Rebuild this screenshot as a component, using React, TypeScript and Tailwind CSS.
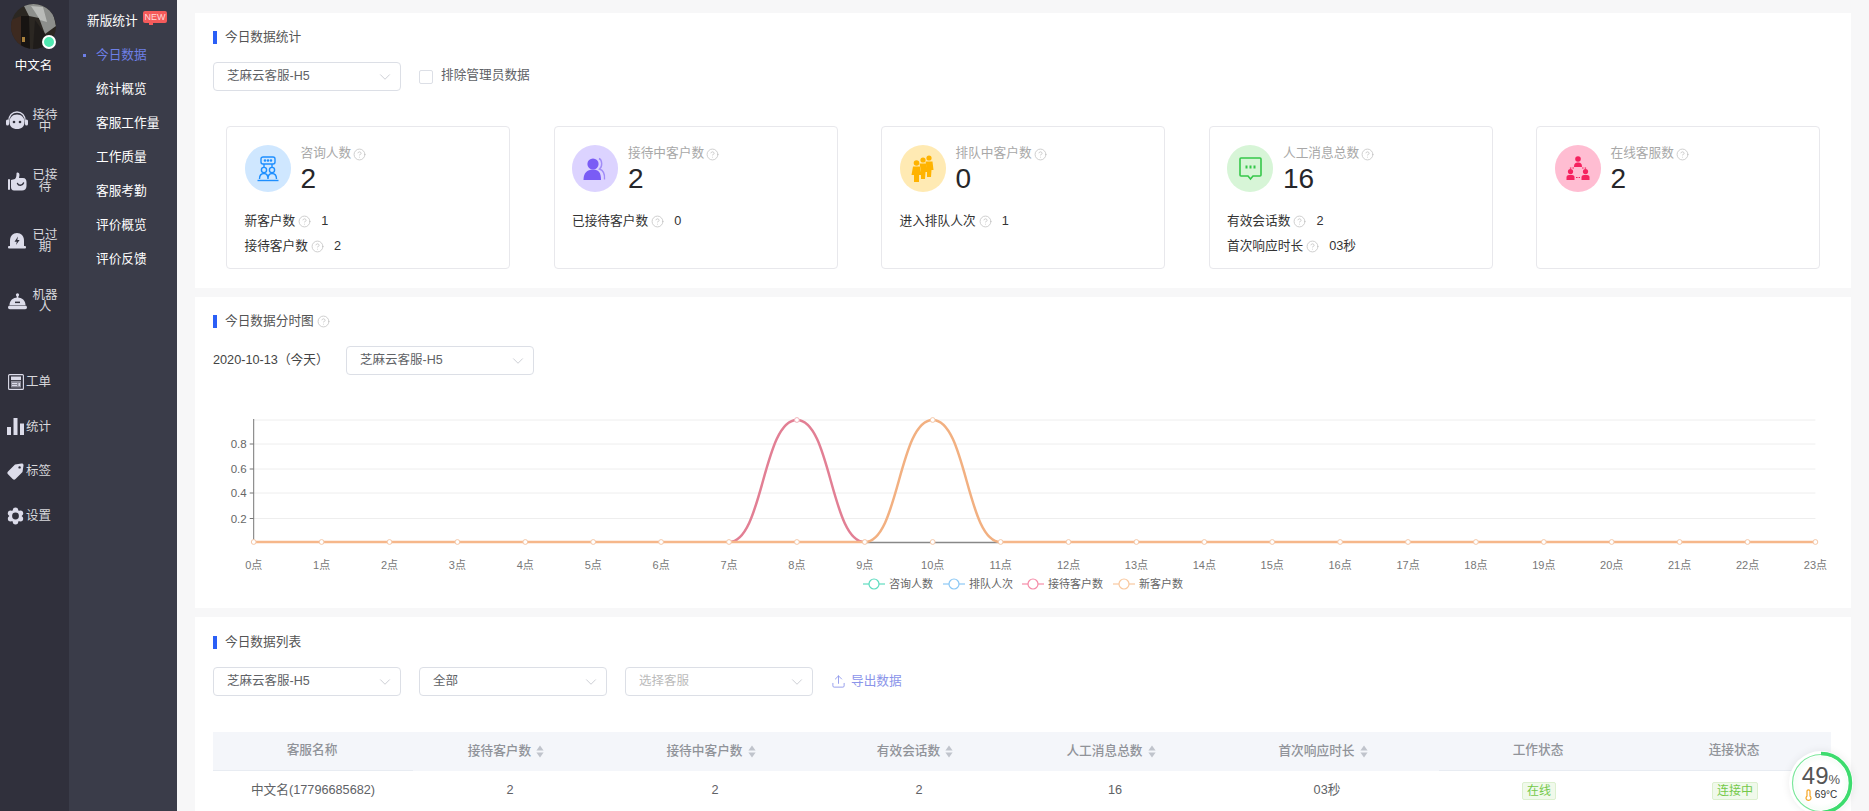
import { ChevronDown, CircleHelp, Upload } from "lucide-react"
import type { ReactNode } from "react"

const iconColor = "#dcdcea"

const HeadsetIcon = () => (
  <svg width="22" height="20" viewBox="0 0 22 20">
    <path d="M2.5 11 C2.5 4.5 6.5 1 11 1 C15.5 1 19.5 4.5 19.5 11" fill="none" stroke={iconColor} strokeWidth="1.3" />
    <rect x="0" y="8.5" width="3" height="6" rx="1.5" fill={iconColor} />
    <rect x="19" y="8.5" width="3" height="6" rx="1.5" fill={iconColor} />
    <path d="M11 3.5 C15.8 3.5 18.5 6.8 18.5 11 C18.5 15.6 15.6 18 11 18 C6.4 18 3.5 15.6 3.5 11 C3.5 6.8 6.2 3.5 11 3.5Z" fill={iconColor} />
    <circle cx="8" cy="11" r="1.3" fill="#30303c" />
    <circle cx="14" cy="11" r="1.3" fill="#30303c" />
  </svg>
)

const ThumbIcon = () => (
  <svg width="19" height="19" viewBox="0 0 19 19">
    <rect x="0" y="7" width="2" height="11" rx="1" fill={iconColor} />
    <path d="M3 8 L7 7 C8.5 5.5 8.5 3 8.5 1.5 C8.5 0 11.5 0 11.5 3 L11 6 L15 6 C17.5 6 18.5 8 18.5 10 L18.5 14 C18.5 17 16.5 18.5 14 18.5 L6 18.5 C4 18.5 3 17 3 15Z" fill={iconColor} />
    <path d="M9.5 11.5 C10.5 14 14.5 14 15.5 11" fill="none" stroke="#30303c" strokeWidth="1.4" strokeLinecap="round" />
  </svg>
)

const AlertIcon = () => (
  <svg width="18" height="18" viewBox="0 0 18 18">
    <path d="M2 14.5 L2 8.5 C2 4 5 1 9 1 C13 1 16 4 16 8.5 L16 14.5Z" fill={iconColor} />
    <rect x="0" y="14" width="18" height="2.4" rx="1" fill={iconColor} />
    <path d="M10 4.5 L6.5 9.8 L8.8 9.8 L8 13 L11.6 8 L9.3 8Z" fill="#30303c" />
  </svg>
)

const BellIcon = () => (
  <svg width="19" height="17" viewBox="0 0 19 17">
    <circle cx="9.5" cy="1.8" r="1.6" fill={iconColor} />
    <rect x="8.7" y="2" width="1.6" height="3" fill={iconColor} />
    <path d="M1.5 12 C1.5 7.5 5 4.5 9.5 4.5 C14 4.5 17.5 7.5 17.5 12Z" fill={iconColor} />
    <rect x="0" y="12.6" width="19" height="3.6" rx="1.8" fill={iconColor} />
    <rect x="7" y="8.6" width="5" height="1.5" fill="#30303c" />
  </svg>
)

const OrderIcon = () => (
  <svg width="16" height="16" viewBox="0 0 16 16">
    <rect x="0.6" y="0.6" width="14.8" height="14.8" rx="1" fill="none" stroke={iconColor} strokeWidth="1.1" />
    <rect x="3" y="2.5" width="10" height="3.6" fill={iconColor} />
    <rect x="3" y="7" width="10" height="6.5" fill="#8f8f9c" />
    <rect x="4" y="9" width="5" height="1" fill={iconColor} />
    <rect x="4" y="11" width="5" height="1" fill={iconColor} />
    <rect x="10.5" y="9" width="1.5" height="3" fill={iconColor} />
  </svg>
)

const BarsIcon = () => (
  <svg width="17" height="17" viewBox="0 0 17 17">
    <rect x="0" y="9" width="4" height="8" fill={iconColor} />
    <rect x="6.5" y="0" width="4" height="17" fill={iconColor} />
    <rect x="13" y="5.5" width="4" height="11.5" fill={iconColor} />
  </svg>
)

const TagIcon = () => (
  <svg width="17" height="17" viewBox="0 0 17 17">
    <path d="M8 1.5 L14.5 0.5 C16 0.5 16.5 1 16.5 2.5 L15.5 9 L8.5 16 C7.6 16.9 6.6 16.9 5.7 16 L1 11.3 C0.1 10.4 0.1 9.4 1 8.5Z" fill={iconColor} />
    <circle cx="12.6" cy="4.4" r="1.2" fill="#30303c" />
  </svg>
)

const GearIcon = () => (
  <svg width="18" height="18" viewBox="0 0 18 18" fill={iconColor}>
    <circle cx="9" cy="9" r="6.6" />
    <circle cx="9" cy="3" r="2.9" />
    <circle cx="9" cy="15" r="2.9" />
    <circle cx="3.8" cy="6" r="2.9" />
    <circle cx="14.2" cy="6" r="2.9" />
    <circle cx="3.8" cy="12" r="2.9" />
    <circle cx="14.2" cy="12" r="2.9" />
    <circle cx="9" cy="9" r="3.6" fill="#30303c" />
  </svg>
)

const Avatar = () => (
  <div className="relative w-[45px] h-[45px]">
    <svg width="45" height="45" viewBox="0 0 45 45" className="rounded-full">
      <rect width="45" height="45" fill="#2b2722" />
      <path d="M12 0 L40 0 L45 22 L34 30 L28 14 L18 12Z" fill="#8d8f8c" />
      <path d="M20 2 L32 3 L36 18 L29 16 L24 8Z" fill="#b9bbb8" />
      <path d="M0 16 L10 12 L14 30 L10 45 L0 45Z" fill="#3d2a20" />
      <path d="M10 12 L18 12 L19 45 L10 45Z" fill="#171412" />
      <path d="M24 16 L34 30 L36 45 L22 45Z" fill="#1f1c1a" />
      <rect x="11" y="33" width="3" height="5" fill="#a8803c" />
    </svg>
    <div className="absolute left-[31px] top-[31px] w-[14px] h-[14px] rounded-full bg-[#4fe8b0] border-2 border-white" />
  </div>
)

const railTop = [
  { icon: <HeadsetIcon />, label: "接待中" },
  { icon: <ThumbIcon />, label: "已接待" },
  { icon: <AlertIcon />, label: "已过期" },
  { icon: <BellIcon />, label: "机器人" },
]

const railBottom = [
  { icon: <OrderIcon />, label: "工单" },
  { icon: <BarsIcon />, label: "统计" },
  { icon: <TagIcon />, label: "标签" },
  { icon: <GearIcon />, label: "设置" },
]

function Rail() {
  return (
    <div className="w-[69px] shrink-0 bg-[#30303c] flex flex-col">
      <div className="pt-[4px] pl-[11px]">
        <Avatar />
      </div>
      <div className="mt-[9px] pr-[2px] text-center text-[12.5px] leading-[16px] text-white">中文名</div>
      <div className="mt-[17px] flex flex-col">
        {railTop.map((item) => (
          <div key={item.label} className="h-[60px] flex items-center pl-[6px]">
            <div className="w-[22px] flex justify-center">{item.icon}</div>
            <div className="ml-[4px] w-[26px] text-center text-[12.5px] leading-[12.5px] text-[#d8d8dc]">{item.label}</div>
          </div>
        ))}
      </div>
      <div className="mt-[29px] flex flex-col">
        {railBottom.map((item) => (
          <div key={item.label} className="h-[44.6px] flex items-center pl-[7px] gap-[2px]">
            <div className="w-[17px] flex justify-center">{item.icon}</div>
            <div className="text-[12.5px] leading-[14px] text-[#d8d8dc]">{item.label}</div>
          </div>
        ))}
      </div>
    </div>
  )
}

const subNav = ["今日数据", "统计概览", "客服工作量", "工作质量", "客服考勤", "评价概览", "评价反馈"]

function SubNav() {
  return (
    <div className="w-[108px] shrink-0 bg-[#3a3c49] pt-[5px] text-[12.7px] text-white">
      <div className="h-[34px] pl-[18px] flex items-center relative">
        新版统计
        <span className="absolute left-[74px] top-[6px] w-[24px] h-[12px] rounded-[2px] bg-[#f45b5b] text-[9px] leading-[12px] text-center text-[#ffd9d9]">
          NEW
          <span className="absolute left-[6px] top-[11px] w-[4px] h-[3px] bg-[#f45b5b]" />
        </span>
      </div>
      {subNav.map((name, i) => (
        <div key={name} className={`h-[34px] pl-[27px] flex items-center relative ${i === 0 ? "text-[#6d7fe6]" : ""}`}>
          {i === 0 && <span className="absolute left-[14px] top-[15px] w-[3px] h-[3px] bg-[#6d7fe6]" />}
          {name}
        </div>
      ))}
    </div>
  )
}

function Title({ children }: { children: ReactNode }) {
  return (
    <div className="flex items-center h-[13px]">
      <span className="w-[4px] h-[13px] bg-[#2b5ff6]" />
      <span className="ml-[8px] text-[12.7px] text-[#555]">{children}</span>
    </div>
  )
}

function Select({ text, width = "w-[188px]", muted }: { text: string; width?: string; muted?: boolean }) {
  return (
    <div className={`${width} h-[29px] shrink-0 flex items-center justify-between pl-[13px] pr-[6px] border border-[#dcdfe6] rounded-[4px] bg-white`}>
      <span className={`text-[12.5px] ${muted ? "text-[#bbb]" : "text-[#606266]"}`}>{text}</span>
      <ChevronDown size={18} strokeWidth={0.9} color="#b4b8c0" />
    </div>
  )
}

const Help = () => <CircleHelp size={13} strokeWidth={1.4} color="#c0c0c0" className="shrink-0" />

const RobotIcon = () => (
  <svg width="22" height="26" viewBox="0 0 22 26" fill="none" stroke="#1e8fff" strokeWidth="1.4">
    <rect x="4" y="1" width="14" height="7" rx="2" />
    <circle cx="8" cy="4.5" r="0.6" fill="#1e8fff" />
    <circle cx="11" cy="4.5" r="0.6" fill="#1e8fff" />
    <circle cx="14" cy="4.5" r="0.6" fill="#1e8fff" />
    <path d="M7 8 L7 11 M15 8 L15 11" />
    <circle cx="7" cy="14" r="2.6" />
    <circle cx="15" cy="14" r="2.6" />
    <path d="M2.5 23 C2.5 19 4.5 17.5 7 17.5 C9.5 17.5 11 19 11 23 M11 23 C11 19 12.5 17.5 15 17.5 C17.5 17.5 19.5 19 19.5 23" />
    <path d="M0.5 24.5 L21.5 24.5" />
  </svg>
)

const PeopleIcon = () => (
  <svg width="24" height="24" viewBox="0 0 24 24">
    <circle cx="10" cy="7" r="5.6" fill="#7a5cf5" />
    <path d="M0.5 23 C0.5 16 4 12.5 10 12.5 C16 12.5 18 16 18 23Z" fill="#7a5cf5" />
    <path d="M16 1.5 C19.5 3 19.5 10 16.5 12 C20.5 13.5 22 17.5 21.5 22.5" fill="none" stroke="#a18cf7" strokeWidth="1.4" />
  </svg>
)

const QueueIcon = () => (
  <svg width="23" height="27" viewBox="0 0 23 27" fill="#ffb300">
    <circle cx="18" cy="3" r="2.6" />
    <path d="M14.5 6.5 L21.5 6.5 L22.5 15 L20.5 15 L20 22 L16 22 L16 14Z" />
    <circle cx="12" cy="5" r="2.6" />
    <path d="M8.5 8.5 L15.5 8.5 L16.5 17 L14.5 17 L14 24 L10 24 L10 16Z" />
    <circle cx="5.5" cy="8" r="2.8" />
    <path d="M2 11.5 L9 11.5 L10.5 20 L8 20 L8 27 L3 27 L3 20 L0.5 20Z" />
  </svg>
)

const ChatIcon = () => (
  <svg width="23" height="24" viewBox="0 0 23 24" fill="none" stroke="#36c74a" strokeWidth="1.6">
    <path d="M2 1 L21 1 C21.6 1 22 1.4 22 2 L22 18 C22 18.6 21.6 19 21 19 L14 19 L11.5 22 L9 19 L2 19 C1.4 19 1 18.6 1 18 L1 2 C1 1.4 1.4 1 2 1Z" />
    <rect x="6.5" y="8.5" width="2" height="3" fill="#36c74a" stroke="none" />
    <rect x="10.5" y="8.5" width="2" height="3" fill="#36c74a" stroke="none" />
    <rect x="14.5" y="8.5" width="2" height="3" fill="#36c74a" stroke="none" />
  </svg>
)

const TeamIcon = () => (
  <svg width="24" height="25" viewBox="0 0 24 25" fill="#f5225f">
    <circle cx="12" cy="3" r="2.8" />
    <path d="M8 11 C8 7.5 9.5 6.5 12 6.5 C14.5 6.5 16 7.5 16 11Z" />
    <circle cx="4.5" cy="15.5" r="2.6" />
    <path d="M0.5 24 L0.5 21 C0.5 19.5 2.5 18.8 4.5 18.8 C6.5 18.8 8.5 19.5 8.5 21 L8.5 24Z" />
    <circle cx="19.5" cy="15.5" r="2.6" />
    <path d="M15.5 24 L15.5 21 C15.5 19.5 17.5 18.8 19.5 18.8 C21.5 18.8 23.5 19.5 23.5 21 L23.5 24Z" />
    <path d="M8 12 L4.5 12 L4.5 12.8 M16 12 L19.5 12 L19.5 12.8 M10 21.5 L14 21.5" fill="none" stroke="#f5225f" strokeWidth="1.2" strokeDasharray="1.6 1" />
  </svg>
)

const cards = [
  {
    title: "咨询人数",
    value: "2",
    bg: "bg-[#cfe7ff]",
    icon: <RobotIcon />,
    rows: [
      { label: "新客户数", value: "1" },
      { label: "接待客户数", value: "2" },
    ],
  },
  {
    title: "接待中客户数",
    value: "2",
    bg: "bg-[#dcd3ff]",
    icon: <PeopleIcon />,
    rows: [{ label: "已接待客户数", value: "0" }],
  },
  {
    title: "排队中客户数",
    value: "0",
    bg: "bg-[#ffeab3]",
    icon: <QueueIcon />,
    rows: [{ label: "进入排队人次", value: "1" }],
  },
  {
    title: "人工消息总数",
    value: "16",
    bg: "bg-[#d7f5d7]",
    icon: <ChatIcon />,
    rows: [
      { label: "有效会话数", value: "2" },
      { label: "首次响应时长", value: "03秒" },
    ],
  },
  {
    title: "在线客服数",
    value: "2",
    bg: "bg-[#ffbdd2]",
    icon: <TeamIcon />,
    rows: [],
  },
]

function StatCards() {
  return (
    <div className="mt-[35px] ml-[13px] mr-[13px] flex justify-between">
      {cards.map((card) => (
        <div key={card.title} className="w-[284px] h-[143px] border border-[#e8e8ec] rounded-[4px] pt-[18px] pl-[17.5px]">
          <div className="flex">
            <div className={`w-[46px] h-[47px] rounded-full flex items-center justify-center ${card.bg}`}>{card.icon}</div>
            <div className="ml-[10px] pt-[1px]">
              <div className="h-[16px] flex items-center gap-[2px] text-[12.7px] text-[#a8a8a8]">
                {card.title}
                <Help />
              </div>
              <div className="text-[28px] leading-[33px] text-[#26262a]">{card.value}</div>
            </div>
          </div>
          <div className="mt-[14px] flex flex-col">
            {card.rows.map((row) => (
              <div key={row.label} className="h-[25px] flex items-center text-[12.7px] text-[#333]">
                {row.label}
                <span className="ml-[3px]"><Help /></span>
                <span className="ml-[10px]">{row.value}</span>
              </div>
            ))}
          </div>
        </div>
      ))}
    </div>
  )
}

const X0 = 58.7
const STEP = 67.9
const BASE = 132
const TOP = 10
const ptX = (i: number) => X0 + i * STEP
const hours = Array.from({ length: 24 }, (_, i) => i)
const gridY = [10, 34, 59, 83, 108.5]
const yLabels = [
  { y: 34, text: "0.8" },
  { y: 59, text: "0.6" },
  { y: 83, text: "0.4" },
  { y: 108.5, text: "0.2" },
]

const bump = (i: number) =>
  `M${ptX(i)} ${BASE} C${ptX(i) + 34} ${BASE} ${ptX(i + 1) - 34} ${TOP} ${ptX(i + 1)} ${TOP} C${ptX(i + 1) + 34} ${TOP} ${ptX(i + 2) - 34} ${BASE} ${ptX(i + 2)} ${BASE}`

const legend = [
  { x: 679, color: "#5fdcc0", label: "咨询人数" },
  { x: 759, color: "#8cc8f5", label: "排队人次" },
  { x: 838, color: "#f58ca8", label: "接待客户数" },
  { x: 929, color: "#f9c9a0", label: "新客户数" },
]

function Chart() {
  return (
    <svg width="1656" height="198" viewBox="0 0 1656 198" className="block mt-[35px] -ml-[18px]">
      {gridY.map((y) => (
        <line key={y} x1={X0} x2={ptX(23)} y1={y} y2={y} stroke="#eeeeee" />
      ))}
      <line x1={X0} x2={X0} y1={9} y2={BASE} stroke="#777" />
      {yLabels.map((l) => (
        <g key={l.text}>
          <line x1={X0 - 4} x2={X0} y1={l.y} y2={l.y} stroke="#777" />
          <text x={X0 - 7} y={l.y + 4} textAnchor="end" fontSize="11.5" fill="#666">{l.text}</text>
        </g>
      ))}
      <line x1={ptX(9)} x2={ptX(11)} y1={BASE + 0.5} y2={BASE + 0.5} stroke="#888" strokeWidth="1.5" />
      <path d={bump(7)} fill="none" stroke="#e27f94" strokeWidth="2.5" />
      <path d={bump(9)} fill="none" stroke="#f2b081" strokeWidth="2.5" />
      <line x1={X0} x2={ptX(9)} y1={BASE} y2={BASE} stroke="#f6b78a" strokeWidth="2.5" />
      <line x1={ptX(11)} x2={ptX(23)} y1={BASE} y2={BASE} stroke="#f6b78a" strokeWidth="2.5" />
      {hours.map((h) => (
        <circle key={h} cx={ptX(h)} cy={BASE} r="2.4" fill="#fff" stroke="#f4c7a8" />
      ))}
      <circle cx={ptX(8)} cy={TOP} r="2.4" fill="#fff" stroke="#f0b0b8" />
      <circle cx={ptX(10)} cy={TOP} r="2.4" fill="#fff" stroke="#f4c7a8" />
      {hours.map((h) => (
        <text key={h} x={ptX(h)} y={159} textAnchor="middle" fontSize="11" fill="#777">{h}点</text>
      ))}
      {legend.map((l) => (
        <g key={l.label}>
          <line x1={l.x - 11} x2={l.x + 11} y1={174} y2={174} stroke={l.color} strokeWidth="1.2" />
          <circle cx={l.x} cy={174} r="5" fill="#fff" stroke={l.color} strokeWidth="1.2" />
          <text x={l.x + 15} y={178} fontSize="11" fill="#666">{l.label}</text>
        </g>
      ))}
    </svg>
  )
}

const SortIcon = () => (
  <svg width="8" height="13" viewBox="0 0 8 13" fill="#c0c4cc" className="ml-[5px]">
    <path d="M4 0.5 L7.6 5.5 L0.4 5.5Z" />
    <path d="M4 12.5 L7.6 7.5 L0.4 7.5Z" />
  </svg>
)

const columns = [
  { label: "客服名称", sort: false },
  { label: "接待客户数", sort: true },
  { label: "接待中客户数", sort: true },
  { label: "有效会话数", sort: true },
  { label: "人工消息总数", sort: true },
  { label: "首次响应时长", sort: true },
  { label: "工作状态", sort: false },
  { label: "连接状态", sort: false },
]

const Tag = ({ text }: { text: string }) => (
  <span className="h-[18px] px-[4px] flex items-center rounded-[2px] bg-[#f0f9eb] border border-[#dcf0cf] text-[12px] text-[#74c94a]">{text}</span>
)

function DataTable() {
  const grid = "grid grid-cols-[200px_194px_216px_192px_200px_224px_200px_192px] w-[1618px]"
  return (
    <div className="mt-[36px]">
      <div className={`${grid} h-[39px] bg-[#f4f6fa] text-[12.7px] font-medium text-[#909399]`}>
        {columns.map((col) => (
          <div key={col.label} className={`flex items-center justify-center ${col.sort ? "pr-[8px]" : "pr-[2px] border-b border-[#e8ecf2]"}`}>
            {col.label}
            {col.sort && <SortIcon />}
          </div>
        ))}
      </div>
      <div className={`${grid} h-[40px] text-[12.7px] text-[#606266]`}>
        <div className="flex items-center justify-center">中文名(17796685682)</div>
        <div className="flex items-center justify-center">2</div>
        <div className="flex items-center justify-center">2</div>
        <div className="flex items-center justify-center">2</div>
        <div className="flex items-center justify-center">16</div>
        <div className="flex items-center justify-center">03秒</div>
        <div className="flex items-center justify-center"><Tag text="在线" /></div>
        <div className="flex items-center justify-center"><Tag text="连接中" /></div>
      </div>
    </div>
  )
}

function Widget() {
  return (
    <div className="absolute left-[1789px] top-[751px] w-[64px] h-[64px] rounded-full bg-white shadow-[0_0_8px_rgba(0,0,0,0.08)]">
      <svg width="64" height="64" viewBox="0 0 64 64" className="absolute inset-0 -rotate-90">
        <circle cx="32" cy="32" r="28.5" fill="none" stroke="#7be79b" strokeWidth="1.2" />
        <circle cx="32" cy="32" r="29.5" fill="none" stroke="#3ddc6e" strokeWidth="3.5" strokeDasharray="91 185" />
      </svg>
      <div className="absolute inset-[5px] rounded-full bg-[radial-gradient(circle,#ffffff_55%,#e6f9ea_100%)] flex flex-col items-center">
        <div className="mt-[7px] h-[26px] flex items-baseline text-[#555]">
          <span className="text-[24px] leading-[26px]">49</span>
          <span className="text-[13px]">%</span>
        </div>
        <div className="flex items-center gap-[3px] text-[10px] leading-[12px] text-[#333]">
          <svg width="7" height="12" viewBox="0 0 7 12" fill="none" stroke="#f5a623" strokeWidth="1.2">
            <path d="M2 7 L2 2 C2 0.4 5 0.4 5 2 L5 7 C7 9 5.6 11.4 3.5 11.4 C1.4 11.4 0 9 2 7Z" />
          </svg>
          69°C
        </div>
      </div>
    </div>
  )
}

export default function App() {
  return (
    <div className="relative w-[1869px] h-[811px] overflow-hidden flex bg-[#f7f7f8] font-['Liberation_Sans','Noto_Sans_CJK_SC',sans-serif]">
      <Rail />
      <SubNav />
      <div className="w-[1656px] ml-[18px] pt-[13px] flex flex-col gap-[9px] shrink-0">
        <div className="h-[275px] bg-white pt-[18px] px-[18px]">
          <Title>今日数据统计</Title>
          <div className="mt-[18px] flex items-start">
            <Select text="芝麻云客服-H5" />
            <div className="ml-[18px] mt-[6px] flex items-center text-[12.7px] text-[#606266]">
              <span className="w-[14px] h-[14px] border border-[#dcdfe6] rounded-[2px]" />
              <span className="ml-[8px] mb-[3px] leading-[14px]">排除管理员数据</span>
            </div>
          </div>
          <StatCards />
        </div>
        <div className="h-[311px] bg-white pt-[18px] px-[18px]">
          <Title>
            <span className="flex items-center gap-[3px]">今日数据分时图<Help /></span>
          </Title>
          <div className="mt-[18px] flex items-center text-[12.7px] text-[#444]">
            <span className="w-[133px]">2020-10-13（今天）</span>
            <Select text="芝麻云客服-H5" />
          </div>
          <Chart />
        </div>
        <div className="flex-1 bg-white pt-[19px] px-[18px]">
          <Title>今日数据列表</Title>
          <div className="mt-[18px] flex items-center gap-[18px]">
            <Select text="芝麻云客服-H5" />
            <Select text="全部" />
            <Select text="选择客服" muted />
            <div className="flex items-center gap-[5px] text-[12.7px] text-[#8b95ea]">
              <Upload size={15} strokeWidth={1.4} />
              导出数据
            </div>
          </div>
          <DataTable />
        </div>
      </div>
      <Widget />
    </div>
  )
}
